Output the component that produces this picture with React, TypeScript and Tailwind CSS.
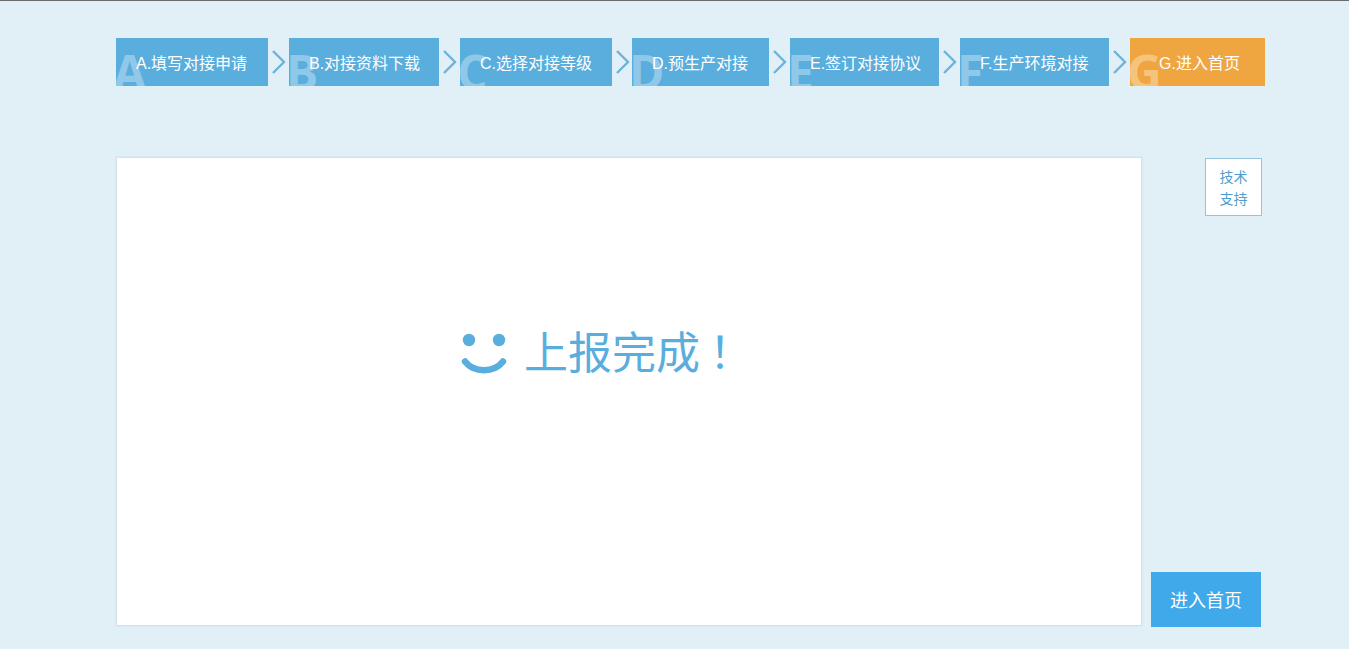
const steps = [
  { letter: "A", label: "A.填写对接申请", width: "w-[152px]", gap: "w-[21px]" },
  { letter: "B", label: "B.对接资料下载", width: "w-[150px]", gap: "w-[21px]" },
  { letter: "C", label: "C.选择对接等级", width: "w-[152px]", gap: "w-[20px]" },
  { letter: "D", label: "D.预生产对接", width: "w-[137px]", gap: "w-[21px]" },
  { letter: "E", label: "E.签订对接协议", width: "w-[149px]", gap: "w-[21px]" },
  { letter: "F", label: "F.生产环境对接", width: "w-[149px]", gap: "w-[21px]" },
];

const Chevron = ({ gap }: { gap: string }) => (
  <div className={`shrink-0 ${gap}`}>
    <svg width="20" height="48" viewBox="0 0 20 48" fill="none">
      <path d="M5 13 L16 24 L5 35" stroke="#6db3dc" strokeWidth="2.4" />
    </svg>
  </div>
);

const Step = ({ letter, label, width, orange }: { letter: string; label: string; width: string; orange?: boolean }) => (
  <div
    className={`relative h-12 shrink-0 overflow-hidden text-base leading-[51px] whitespace-nowrap text-white ${width} ${
      orange ? "bg-[#f0a640] pl-[29px]" : "bg-[#5aaedd] pl-5"
    }`}
  >
    <span
      className={`absolute top-[4px] left-[-3px] text-[48px] leading-[60px] font-bold font-['Open_Sans',sans-serif] ${
        orange ? "text-[#f5c47c]" : "text-[#8fc8e9]"
      }`}
    >
      {letter}
    </span>
    <span className="relative">{label}</span>
  </div>
);

export default function App() {
  return (
    <div className="h-[649px] overflow-hidden border-t border-[#6b6b6b] bg-[#e1eff7] pt-[37px] pl-[116px] font-['Liberation_Sans','Noto_Sans_CJK_SC',sans-serif]">
      <div className="flex">
        {steps.map((step) => (
          <div key={step.letter} className="flex">
            <Step letter={step.letter} label={step.label} width={step.width} />
            <Chevron gap={step.gap} />
          </div>
        ))}
        <Step letter="G" label="G.进入首页" width="w-[135px]" orange />
      </div>

      <div className="mt-[71px] flex items-start">
        <div className="flex h-[469px] w-[1026px] items-center border border-[#d3e2ec] bg-white pb-[76px] pl-[344px] shadow-[0_0_2px_#cfdfe9]">
          <svg width="46" height="42" viewBox="0 0 46 42" fill="none" className="mr-[17px]">
            <circle cx="8" cy="7" r="6.2" fill="#5aaedd" />
            <circle cx="38" cy="7" r="6.2" fill="#5aaedd" />
            <path d="M4 28.5 C13 40, 33 40, 42 28.5" stroke="#5aaedd" strokeWidth="6.5" strokeLinecap="round" />
          </svg>
          <span className="text-[44px] leading-[60px] text-[#5aaedd]">
            上报完成<span className="ml-[9px]">！</span>
          </span>
        </div>

        <div className="flex h-[470px] w-[123px] flex-col items-start justify-between">
          <div className="mt-[1px] ml-[63px] flex h-[58px] w-[57px] flex-col items-center justify-center border border-[#93c3dd] bg-white pt-[1px] text-sm leading-[22px] text-[#4c9fd0]">
            <span>技术</span>
            <span>支持</span>
          </div>
          <button className="ml-[9px] h-[55px] w-[110px] bg-[#3fa9ea] pt-[2px] text-lg text-white">进入首页</button>
        </div>
      </div>
    </div>
  );
}
